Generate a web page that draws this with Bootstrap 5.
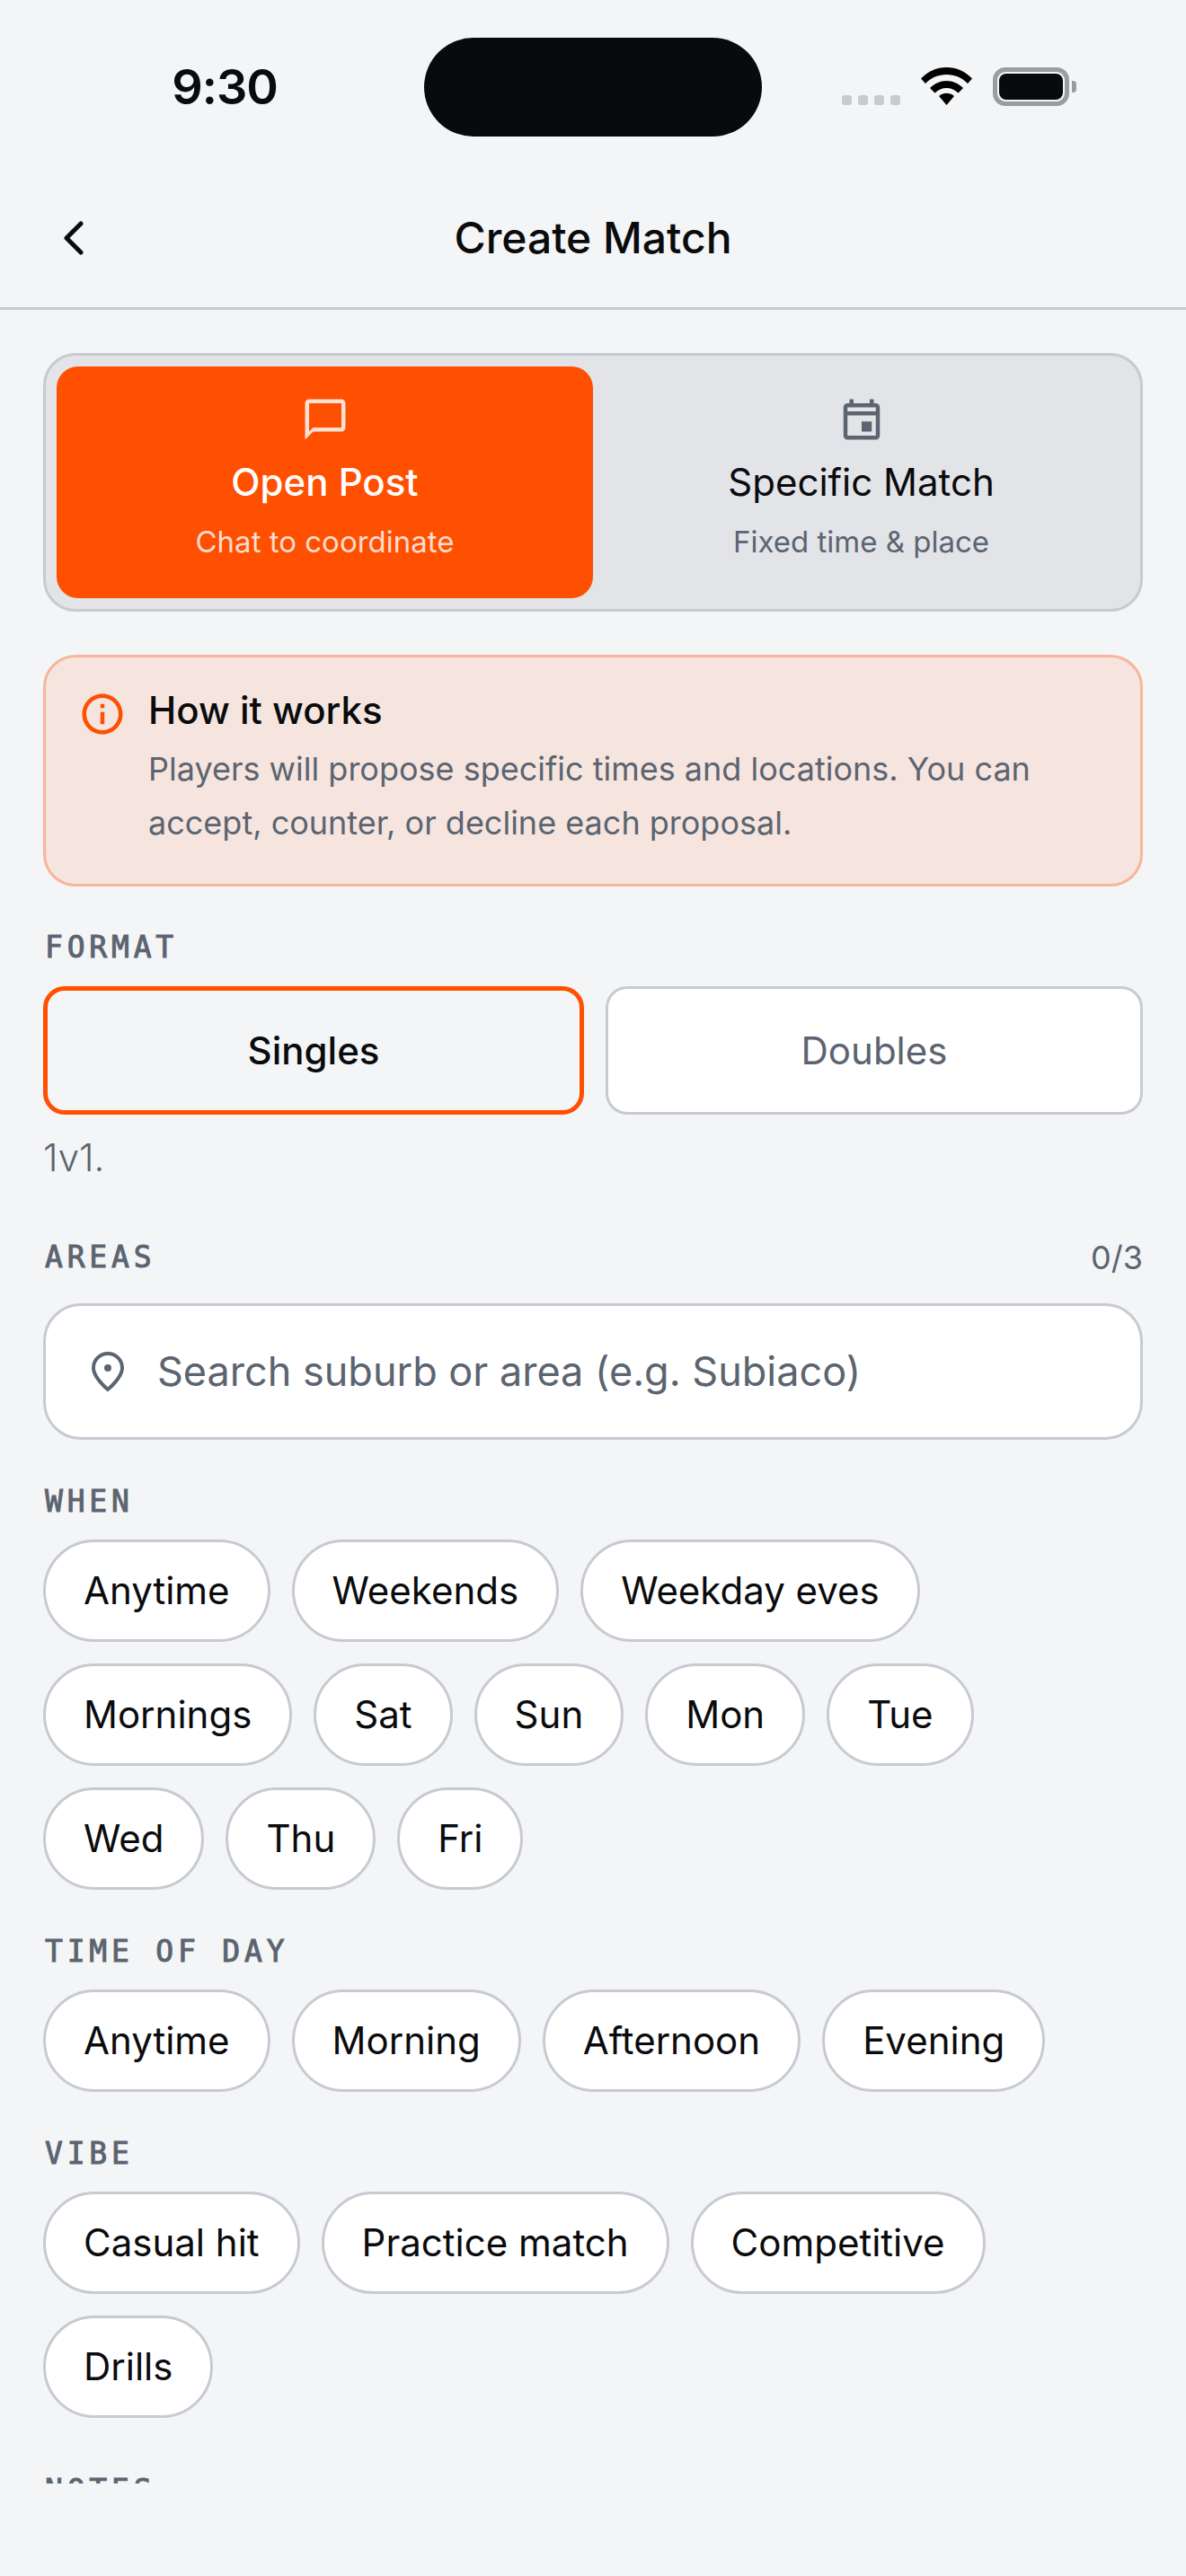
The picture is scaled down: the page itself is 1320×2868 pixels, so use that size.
<!DOCTYPE html>
<html lang="en"><head><meta charset="utf-8"><title>Create Match</title>
<link href="https://cdn.jsdelivr.net/npm/bootstrap@5.3.0/dist/css/bootstrap.min.css" rel="stylesheet">
<style>
html,body{height:100%}
body{background:#f4f5f7;font-family:Inter,"Liberation Sans",sans-serif;color:#0a0b0d;overflow:hidden;width:1320px;height:2868px}
.stbar{height:187px;padding:42px 0 0 0}
.st-time{width:472px;height:110px;font-size:54px;font-weight:600;text-align:center;padding-left:28px;line-height:110px;letter-spacing:-1px}
.island{width:376px;height:110px;background:#090a0c;border-radius:55px}
.st-right{padding-left:89px;padding-top:33px;gap:0}
.sdots{display:flex;gap:7px;margin-top:31px;margin-right:23px}
.sdots i{width:11px;height:11px;border-radius:3px;background:#c8cad0;display:block}
.wifi{width:57px;height:42px;display:block;margin-right:23px}
.batt{width:85px;height:43px;border:5px solid #9a9ca1;border-radius:14px;padding:2px;display:block;position:relative}
.batt i{display:block;width:100%;height:100%;background:#090a0c;border-radius:8px}
.batt-cap{width:5px;height:13px;background:#9a9ca1;border-radius:0 4px 4px 0;margin:15px 0 0 3px}
.topbar{height:158px;border-bottom:3px solid #c8cad2;position:relative}
.backbtn{width:24px;height:38px;margin-left:70px;display:block}
.ttl{font-size:48px;font-weight:500;position:absolute;left:0;right:0;top:0;line-height:156px;text-align:center}
.scroller{height:2420px;overflow:hidden;padding:48px 48px 0}
.seg{height:288px;border:3px solid #c8cad2;background:#e2e4e8;border-radius:36px;padding:12px;display:flex}
.segitem{flex:1 1 0;border-radius:24px;display:flex;flex-direction:column;align-items:center;color:#0a0b0d;padding-top:32px}
.segitem svg{width:54px;height:54px;fill:#5b6470;display:block}
.seg-on{background:#ff4f00;color:#fff}
.seg-on svg{fill:#fbe0d4}
.segname{font-size:42px;line-height:60px;margin-top:13px;font-weight:500}
.segsub{font-size:33px;line-height:48px;margin-top:12px;color:#5b6470}
.seg-on .segsub{color:#fbdccd}
.infobox{margin-top:48px;height:258px;background:#f6e5df;border:3px solid #f9b49c;border-radius:36px;padding:32px 36px;display:flex;gap:24px}
.infobox svg{width:54px;height:54px;fill:#ff4f00;flex:none;margin-top:4px}
.infottl{font-size:42px;line-height:54px;font-weight:500}
.infotxt{font-size:36px;line-height:60px;color:#5b6470;margin-top:8px}
.lbl{font-family:"DejaVu Sans Mono","Liberation Mono",monospace;font-weight:400;font-size:33px;line-height:42px;letter-spacing:4.8px;color:#5b6470;-webkit-text-stroke:1px #5b6470;padding-left:2px}
.fmt-lbl{margin-top:47px}
.fmtrow{display:flex;gap:24px;margin-top:22px}
.fmtbtn{flex:1 1 0;height:143px;border:3px solid #c8cad2;background:#fff;color:#5b6470;border-radius:24px;font-size:42px;line-height:137px;text-align:center}
.fmt-on{border:5px solid #ff4f00;background:transparent;color:#0a0b0d;font-weight:500;line-height:133px}
.hintline{font-size:42px;line-height:60px;color:#5b6470;margin-top:18px;font-weight:300}
.ctr{font-size:36px;line-height:42px;color:#5b6470}
.searchbox{height:152px;margin-top:30px;background:#fff;border:3px solid #c8cad2;border-radius:42px;padding:0 45px;display:flex;align-items:center;gap:31px;font-size:45px;color:#5b6470}
.searchbox svg{width:48px;height:48px;flex:none}
.chips{display:flex;flex-wrap:wrap;gap:24px;margin-top:21px}
.chip{height:114px;border:3px solid #c8cad2;background:#fff;border-radius:57px;padding:0 42px;font-size:42px;line-height:108px}
.gap-areas{margin-top:60px}.gap-sec{margin-top:48px}.gap-notes{margin-top:60px}
</style></head>
<body>
<div class="stbar d-flex">
  <div class="st-time">9:30</div>
  <div class="island"></div>
  <div class="st-right d-flex align-items-start">
    <div class="sdots"><i></i><i></i><i></i><i></i></div>
    <svg class="wifi" viewBox="0 0 57 42"><path d="M28.500 0C17.500 0 7.500 4.500 0 12.500L5 18C11 11.500 19.500 8 28.500 8S46 11.500 52 18L57 12.500C49.500 4.500 39.500 0 28.500 0Z"/><path d="M10 23L15.500 28.500C19 25 23.500 23 28.500 23S38 25 41.500 28.500L47 23C42 18 35.500 15 28.500 15S15 18 10 23Z"/><path d="M20 32L28.500 42L37 32C34.500 29.800 31.500 28.800 28.500 28.800S22.500 29.800 20 32Z"/></svg>
    <span class="batt"><i></i></span><span class="batt-cap"></span>
  </div>
</div>
<div class="topbar d-flex align-items-center">
  <svg class="backbtn" viewBox="0 0 24 38" fill="none" stroke="#0a0b0d" stroke-width="5" stroke-linecap="round" stroke-linejoin="round"><path d="M20 3L4 19L20 35"/></svg>
  <div class="ttl">Create Match</div>
</div>
<div class="scroller">
  <div class="seg">
    <div class="segitem seg-on">
      <svg viewBox="0 0 24 24"><path d="M20 2H4c-1.100 0-2 .9-2 2v18l4-4h14c1.100 0 2-.9 2-2V4c0-1.100-.9-2-2-2zm0 14H6l-2 2V4h16v12z"/></svg>
      <div class="segname">Open Post</div><div class="segsub">Chat to coordinate</div>
    </div>
    <div class="segitem">
      <svg viewBox="0 0 24 24"><path d="M19 4h-1V2h-2v2H8V2H6v2H5c-1.110 0-2 .9-2 2v14c0 1.100.89 2 2 2h14c1.100 0 2-.9 2-2V6c0-1.100-.9-2-2-2zm0 16H5V10h14v10zm0-12H5V6h14v2zm-2 5h-5v5h5v-5z"/></svg>
      <div class="segname fw-normal">Specific Match</div><div class="segsub">Fixed time &amp; place</div>
    </div>
  </div>
  <div class="infobox">
    <svg viewBox="0 0 24 24"><path d="M11 7h2v2h-2zm0 4h2v6h-2zm1-9C6.480 2 2 6.480 2 12s4.480 10 10 10 10-4.480 10-10S17.520 2 12 2zm0 18c-4.410 0-8-3.590-8-8s3.590-8 8-8 8 3.590 8 8-3.590 8-8 8z"/></svg>
    <div><div class="infottl">How it works</div><div class="infotxt">Players will propose specific times and locations. You can accept, counter, or decline each proposal.</div></div>
  </div>
  <div class="lbl fmt-lbl">FORMAT</div>
  <div class="fmtrow"><div class="fmtbtn fmt-on">Singles</div><div class="fmtbtn">Doubles</div></div>
  <div class="hintline">1v1.</div>
  <div class="d-flex justify-content-between align-items-center gap-areas"><div class="lbl">AREAS</div><div class="ctr">0/3</div></div>
  <div class="searchbox">
    <svg viewBox="0 0 24 24" fill="none" stroke="#5b6470" stroke-width="2"><path d="M20 10c0 5.500-8 12-8 12s-8-6.500-8-12a8 8 0 0 1 16 0Z"/><circle cx="12" cy="10" r="2" fill="#5b6470" stroke="none"/></svg>
    <span>Search suburb or area (e.g. Subiaco)</span>
  </div>
  <div class="lbl gap-sec">WHEN</div>
  <div class="chips"><span class="chip">Anytime</span><span class="chip">Weekends</span><span class="chip">Weekday eves</span><span class="chip">Mornings</span><span class="chip">Sat</span><span class="chip">Sun</span><span class="chip">Mon</span><span class="chip">Tue</span><span class="chip">Wed</span><span class="chip">Thu</span><span class="chip">Fri</span></div>
  <div class="lbl gap-sec">TIME OF DAY</div>
  <div class="chips"><span class="chip">Anytime</span><span class="chip">Morning</span><span class="chip">Afternoon</span><span class="chip">Evening</span></div>
  <div class="lbl gap-sec">VIBE</div>
  <div class="chips"><span class="chip">Casual hit</span><span class="chip">Practice match</span><span class="chip">Competitive</span><span class="chip">Drills</span></div>
  <div class="lbl gap-notes">NOTES</div>
</div>
<script src="https://cdn.jsdelivr.net/npm/bootstrap@5.3.0/dist/js/bootstrap.bundle.min.js"></script>
</body></html>
